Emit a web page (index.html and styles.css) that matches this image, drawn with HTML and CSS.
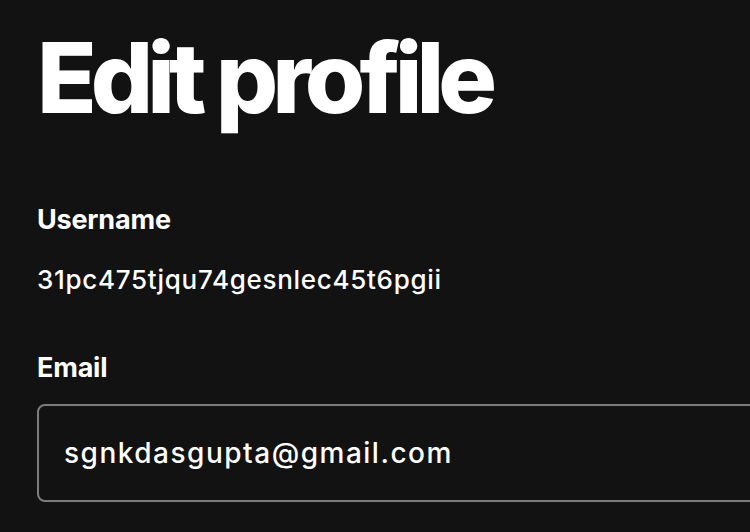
FILE: index.html
```html
<!DOCTYPE html>
<html lang="en">
<head>
    <meta charset="UTF-8">
    <meta name="viewport" content="width=device-width, initial-scale=1.0">
    <title>Edit profile</title>
    <link rel="stylesheet" href="styles.css">
</head>
<body>
    <main class="page">
        <h1 class="title">Edit profile</h1>
        <div class="field">
            <p class="label">Username</p>
            <p class="value">31pc475tjqu74gesnlec45t6pgii</p>
        </div>
        <div class="field">
            <label class="label" for="email">Email</label>
            <input class="input" id="email" type="email" value="sgnkdasgupta@gmail.com">
        </div>
    </main>
</body>
</html>
```

FILE: styles.css
```css
*{
    box-sizing: border-box;
    margin: 0;
    padding: 0;
}
html, body{
    background: #121212;
    overflow: hidden;
}
body{
    font-family: 'Inter', 'Noto Sans', sans-serif;
    color: #ffffff;
}
.page{
    padding: 18px 0 0 37px;
    width: 750px;
}
.title{
    font-size: 98px;
    font-weight: 800;
    line-height: 120px;
    letter-spacing: -6px;
    margin-bottom: 66px;
}
.field{
    display: flex;
    flex-direction: column;
    align-items: flex-start;
    margin-bottom: 56px;
}
.field:last-child{
    margin-bottom: 0;
}
.label{
    font-size: 27px;
    font-weight: 700;
    line-height: 32px;
    letter-spacing: -0.2px;
    margin-bottom: 20px;
}
.value{
    font-size: 26px;
    font-weight: 500;
    line-height: 32px;
    letter-spacing: 0.7px;
    margin-top: 8px;
}
.input{
    width: calc(100% + 80px);
    height: 98px;
    padding: 0 25px;
    background: #121212;
    color: #ffffff;
    border: 2px solid #7c7c7c;
    border-radius: 8px;
    font-family: inherit;
    font-size: 28px;
    font-weight: 500;
    letter-spacing: 1.5px;
    outline: none;
}
```
